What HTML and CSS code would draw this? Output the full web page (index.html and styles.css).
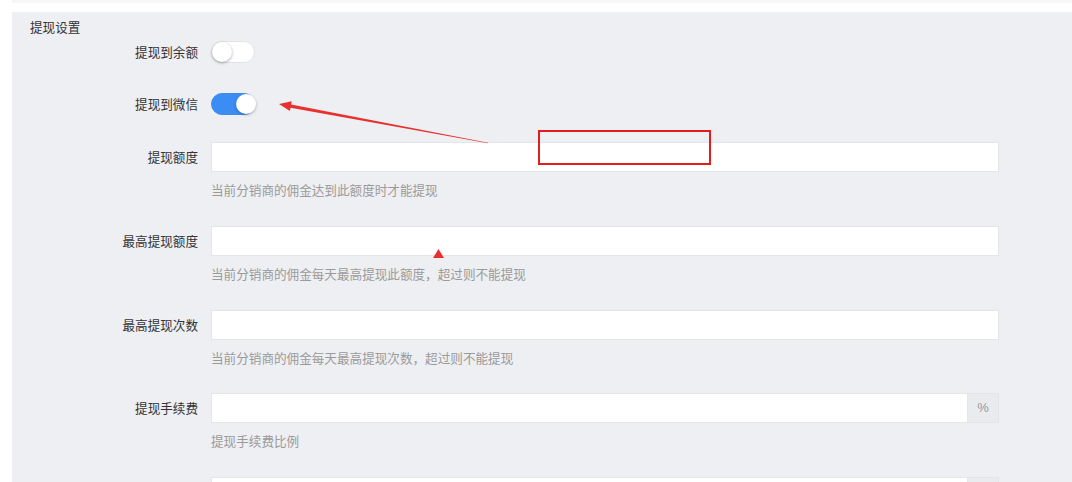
FILE: index.html
```html
<!DOCTYPE html>
<html lang="zh-CN">
<head>
<meta charset="utf-8">
<title>提现设置</title>
<link rel="stylesheet" href="styles.css">
</head>
<body>
<div class="topstrip"></div>
<section class="panel">
  <div class="panel-title">提现设置</div>
  <div class="form">
    <div class="row row-toggle">
      <label class="label">提现到余额</label>
      <div class="ctrl"><span class="switch"><span class="knob"></span></span></div>
    </div>
    <div class="row row-toggle row-toggle-last">
      <label class="label">提现到微信</label>
      <div class="ctrl"><span class="switch on"><span class="knob"></span></span></div>
    </div>
    <div class="row row-input">
      <label class="label">提现额度</label>
      <div class="ctrl">
        <input class="input" type="text">
        <div class="help">当前分销商的佣金达到此额度时才能提现</div>
      </div>
    </div>
    <div class="row row-input">
      <label class="label">最高提现额度</label>
      <div class="ctrl">
        <input class="input" type="text">
        <div class="help">当前分销商的佣金每天最高提现此额度，超过则不能提现</div>
      </div>
    </div>
    <div class="row row-input">
      <label class="label">最高提现次数</label>
      <div class="ctrl">
        <input class="input" type="text">
        <div class="help">当前分销商的佣金每天最高提现次数，超过则不能提现</div>
      </div>
    </div>
    <div class="row row-input">
      <label class="label">提现手续费</label>
      <div class="ctrl">
        <div class="group"><input class="input" type="text"><span class="addon">%</span></div>
        <div class="help">提现手续费比例</div>
      </div>
    </div>
    <div class="row row-input">
      <span class="label"></span>
      <div class="ctrl">
        <div class="group"><input class="input" type="text"><span class="addon"></span></div>
      </div>
    </div>
  </div>
</section>

<svg class="annot" width="1072" height="482" viewBox="0 0 1072 482">
  <polygon fill="#e8312e" points="279,104 291.7,101.3 291.1,104.6 488,142.7 488,143.3 290.5,107.8 289.9,111.1"/>
  <rect x="539" y="131" width="171" height="33" fill="none" stroke="#e41c1c" stroke-width="2"/>
  <polygon fill="#e8312e" points="438.5,249 444,258 433,258"/>
</svg>
</body>
</html>
```

FILE: styles.css
```css
html, body {
  margin: 0;
  padding: 0;
}
body {
  position: relative;
  width: 1072px;
  height: 482px;
  overflow: hidden;
  background: #ffffff;
  font-family: "Noto Sans CJK SC", "Noto Sans", sans-serif;
  font-size: 12.6px;
  color: #333333;
}
.topstrip {
  height: 3px;
  margin-left: 12px;
  background: #f6f7f9;
}
.panel {
  margin: 9px 0 0 12px;
  background: #eeeff3;
  height: 470px;
  overflow: hidden;
}
.panel-title {
  padding: 5px 0 0 18px;
  line-height: 20px;
  color: #333;
}
.form {
  padding-top: 4px;
}
.row {
  display: grid;
  grid-template-columns: 186px 788px;
  column-gap: 13px;
}
.label {
  text-align: right;
  color: #333;
  line-height: 20px;
  white-space: nowrap;
}
.row-toggle {
  height: 22px;
  align-items: center;
  margin-bottom: 30px;
}
.row-toggle-last {
  margin-bottom: 27px;
}
.row-input {
  margin-bottom: 26.75px;
}
.row-input .label {
  line-height: 30px;
}
.switch {
  position: relative;
  display: block;
  width: 42px;
  height: 20px;
  border: 1px solid #e2e3e6;
  border-radius: 11px;
  background: #ffffff;
  box-sizing: content-box;
}
.switch .knob {
  position: absolute;
  top: 0;
  left: 0;
  width: 20px;
  height: 20px;
  border-radius: 50%;
  background: #ffffff;
  box-shadow: 0 1px 3px rgba(0, 0, 0, 0.35);
}
.switch.on {
  background: #3b8df4;
  border-color: #3b8df4;
}
.switch.on .knob {
  left: 24px;
  box-shadow: 0 1px 3px rgba(0, 0, 0, 0.3);
}
.input {
  display: block;
  box-sizing: border-box;
  width: 788px;
  height: 30px;
  margin: 0;
  padding: 0 8px;
  border: 1px solid #e4e5e9;
  background: #ffffff;
  font: inherit;
  outline: none;
}
.group {
  display: flex;
  width: 788px;
}
.group .input {
  flex: 1;
  width: auto;
}
.addon {
  width: 31px;
  height: 30px;
  box-sizing: border-box;
  border: 1px solid #e4e5e9;
  border-left: 0;
  background: #eaebee;
  color: #999999;
  text-align: center;
  line-height: 28px;
  font-family: "Liberation Sans", Arial, sans-serif;
  font-size: 13px;
}
.help {
  margin-top: 9px;
  line-height: 18px;
  color: #9a9a9a;
}
.annot {
  position: absolute;
  left: 0;
  top: 0;
  pointer-events: none;
}
```
